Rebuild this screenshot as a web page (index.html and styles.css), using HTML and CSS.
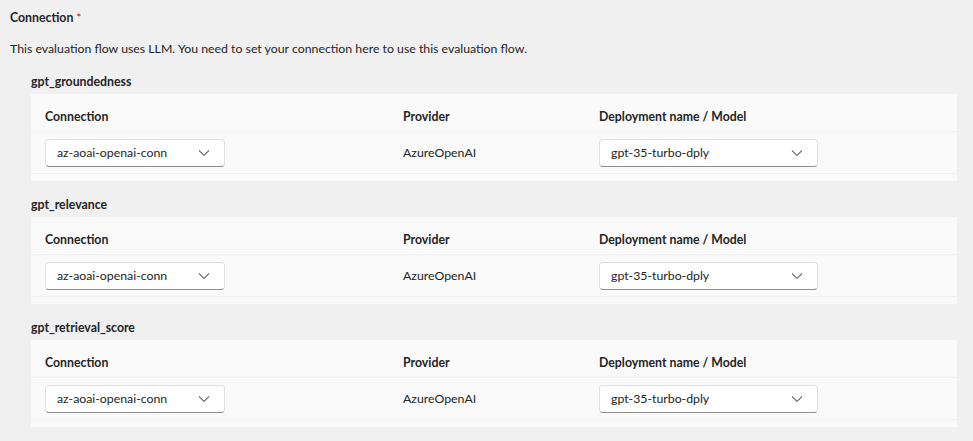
FILE: index.html
```html
<!DOCTYPE html>
<html>
<head>
<meta charset="utf-8">
<link rel="stylesheet" href="styles.css">
</head>
<body>
<div class="page">
  <div class="field-label">Connection <span class="req">*</span></div>
  <div class="desc">This evaluation flow uses LLM. You need to set your connection here to use this evaluation flow.</div>

  <div class="section">
    <div class="section-title">gpt_groundedness</div>
    <div class="card">
      <div class="row head">
        <div class="c1">Connection</div>
        <div class="c2">Provider</div>
        <div class="c3">Deployment name / Model</div>
      </div>
      <div class="row data">
        <div class="c1"><div class="dd dd-conn"><span>az-aoai-openai-conn</span><svg class="chev" viewBox="0 0 12 8" width="12" height="8"><path d="M1 1.5 L6 6.5 L11 1.5" fill="none" stroke="#707070" stroke-width="1.1"/></svg></div></div>
        <div class="c2">AzureOpenAI</div>
        <div class="c3"><div class="dd dd-model"><span>gpt-35-turbo-dply</span><svg class="chev" viewBox="0 0 12 8" width="12" height="8"><path d="M1 1.5 L6 6.5 L11 1.5" fill="none" stroke="#707070" stroke-width="1.1"/></svg></div></div>
      </div>
    </div>
  </div>

  <div class="section">
    <div class="section-title">gpt_relevance</div>
    <div class="card">
      <div class="row head">
        <div class="c1">Connection</div>
        <div class="c2">Provider</div>
        <div class="c3">Deployment name / Model</div>
      </div>
      <div class="row data">
        <div class="c1"><div class="dd dd-conn"><span>az-aoai-openai-conn</span><svg class="chev" viewBox="0 0 12 8" width="12" height="8"><path d="M1 1.5 L6 6.5 L11 1.5" fill="none" stroke="#707070" stroke-width="1.1"/></svg></div></div>
        <div class="c2">AzureOpenAI</div>
        <div class="c3"><div class="dd dd-model"><span>gpt-35-turbo-dply</span><svg class="chev" viewBox="0 0 12 8" width="12" height="8"><path d="M1 1.5 L6 6.5 L11 1.5" fill="none" stroke="#707070" stroke-width="1.1"/></svg></div></div>
      </div>
    </div>
  </div>

  <div class="section">
    <div class="section-title">gpt_retrieval_score</div>
    <div class="card">
      <div class="row head">
        <div class="c1">Connection</div>
        <div class="c2">Provider</div>
        <div class="c3">Deployment name / Model</div>
      </div>
      <div class="row data">
        <div class="c1"><div class="dd dd-conn"><span>az-aoai-openai-conn</span><svg class="chev" viewBox="0 0 12 8" width="12" height="8"><path d="M1 1.5 L6 6.5 L11 1.5" fill="none" stroke="#707070" stroke-width="1.1"/></svg></div></div>
        <div class="c2">AzureOpenAI</div>
        <div class="c3"><div class="dd dd-model"><span>gpt-35-turbo-dply</span><svg class="chev" viewBox="0 0 12 8" width="12" height="8"><path d="M1 1.5 L6 6.5 L11 1.5" fill="none" stroke="#707070" stroke-width="1.1"/></svg></div></div>
      </div>
    </div>
  </div>
</div>
</body>
</html>
```
FILE: styles.css
```css
html, body {
  margin: 0;
  padding: 0;
  background: #f0f0f0;
}
body {
  font-family: Lato, "Liberation Sans", sans-serif;
  font-size: 12.3px;
  color: #242424;
  width: 973px;
  height: 441px;
  overflow: hidden;
}
.page {
  padding: 8px 16px 0 10px;
}
.field-label {
  font-weight: 700;
  line-height: 20px;
}
.req {
  color: #c50f1f;
  font-weight: 400;
}
.desc {
  line-height: 20px;
  margin-top: 11px;
  margin-bottom: 13px;
}
.section {
  margin-left: 21px;
  margin-bottom: 14px;
}
.section-title {
  font-weight: 700;
  line-height: 20px;
  margin-bottom: 2px;
}
.card {
  background: #fafafa;
  padding-bottom: 7px;
}
.row {
  display: flex;
  border-bottom: 1px solid #f0f0f0;
  padding-left: 14px;
}
.row.head {
  height: 38px;
  box-sizing: border-box;
  padding-top: 13px;
  line-height: 20px;
  font-weight: 700;
}
.row.data {
  height: 42px;
  box-sizing: border-box;
  align-items: center;
}
.c1 { width: 358px; }
.c2 { width: 196px; }
.c3 { flex: 1; }
.dd {
  box-sizing: border-box;
  height: 28px;
  background: #ffffff;
  border: 1px solid #e0e0e0;
  border-bottom-color: #8f8f8f;
  border-radius: 4px;
  display: flex;
  align-items: center;
  justify-content: space-between;
  padding: 0 14px 0 11px;
}
.dd-conn { width: 180px; }
.dd-model { width: 219px; }
.chev { display: block; }
```
